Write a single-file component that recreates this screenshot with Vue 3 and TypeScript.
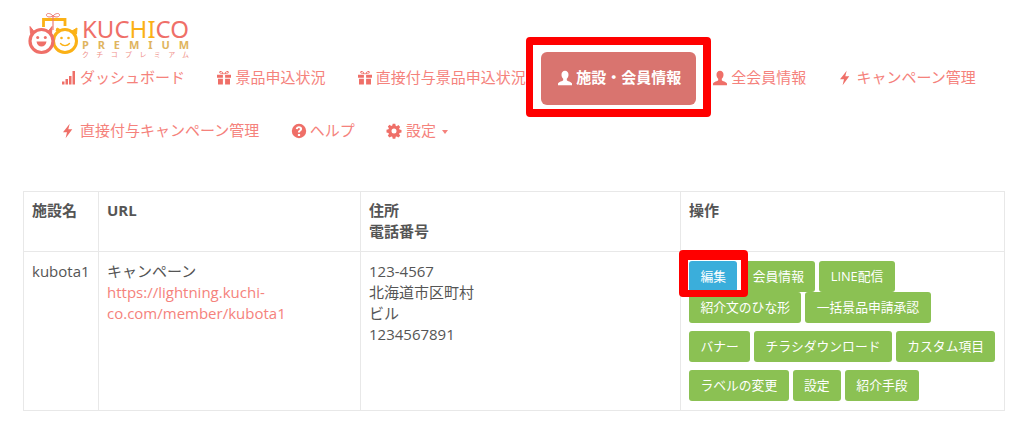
<script setup lang="ts">
type NavIcon = 'signal' | 'gift' | 'user' | 'flash' | 'help' | 'cog';

interface NavItem {
  label: string;
  icon: NavIcon;
  active?: boolean;
  caret?: boolean;
}

const navItems: NavItem[] = [
  { label: 'ダッシュボード', icon: 'signal' },
  { label: '景品申込状況', icon: 'gift' },
  { label: '直接付与景品申込状況', icon: 'gift' },
  { label: '施設・会員情報', icon: 'user', active: true },
  { label: '全会員情報', icon: 'user' },
  { label: 'キャンペーン管理', icon: 'flash' },
  { label: '直接付与キャンペーン管理', icon: 'flash' },
  { label: 'ヘルプ', icon: 'help' },
  { label: '設定', icon: 'cog', caret: true }
];

const buttonGroups = [
  ['編集', '会員情報', 'LINE配信', '紹介文のひな形', '一括景品申請承認'],
  ['バナー', 'チラシダウンロード', 'カスタム項目'],
  ['ラベルの変更', '設定', '紹介手段']
];

const addressLines = ['123-4567', '北海道市区町村', 'ビル', '1234567891'];
</script>

<template>
  <div class="page">
    <header class="header">
      <svg class="logo" width="170" height="48" viewBox="0 0 170 48" role="img" aria-label="KUCHICO PREMIUM">
        <!-- gift -->
        <path d="M27 4c-3-3.500-7-3-6.500-.5.4 1.800 4 2 6.500.5 2.500 1.500 6 1.300 6.500-.5.500-2.500-3.500-3-6.500.5z" fill="none" stroke="#ef7b74" stroke-width="1" />
        <path d="M17.500 15V7.500h21.500V14" fill="none" stroke="#fbb116" stroke-width="2.800" />
        <path d="M27 4v14" stroke="#ef7b74" stroke-width="1.200" />
        <!-- yellow face -->
        <path d="M46 19l5-3-.5 6z" fill="#fbb116" stroke="#fbb116" stroke-linejoin="round" />
        <path d="M30 19l1-3 4 2z" fill="#fbb116" stroke="#fbb116" stroke-linejoin="round" />
        <circle cx="39" cy="29" r="11.500" fill="#fff" stroke="#fbb116" stroke-width="3" />
        <circle cx="35.500" cy="26" r="1.300" fill="#fbb116" />
        <circle cx="42.500" cy="26" r="1.300" fill="#fbb116" />
        <path d="M34.500 31.500c2 2.800 7 2.800 9 0" fill="none" stroke="#fbb116" stroke-width="1.300" stroke-linecap="round" />
        <!-- red face -->
        <path d="M8 19.500L4 14.500l.5 7zM22 19.500l4-5-.5 7z" fill="#ef6f68" stroke="#ef6f68" stroke-linejoin="round" />
        <circle cx="15.500" cy="29" r="11.500" fill="#fff" stroke="#ef6f68" stroke-width="3.200" />
        <circle cx="11.700" cy="25.500" r="1.500" fill="#ef6f68" />
        <circle cx="19.300" cy="25.500" r="1.500" fill="#ef6f68" />
        <path d="M10.500 29.500h10c-.5 3.500-2.500 5-5 5s-4.500-1.500-5-5z" fill="#ef6f68" />
        <!-- wordmark -->
        <text x="56" y="26" class="logo-word" textLength="107" lengthAdjust="spacingAndGlyphs">KUC<tspan fill="#fbb116">HI</tspan>CO</text>
        <text x="56" y="37" class="logo-sub" textLength="107">PREMIUM</text>
        <text x="56" y="45" class="logo-kana" textLength="107">クチコプレミアム</text>
      </svg>

      <nav class="nav">
        <a
          v-for="item in navItems"
          :key="item.label"
          class="nav-item"
          :class="{ active: item.active, 'has-cog': item.icon === 'cog' }"
        >
          <svg class="nav-icon" viewBox="0 0 16 16" aria-hidden="true">
            <template v-if="item.icon === 'signal'">
              <rect x="1" y="11.500" width="2.500" height="3" />
              <rect x="4.500" y="9" width="2.500" height="5.500" />
              <rect x="8" y="6" width="2.500" height="8.500" />
              <rect x="11.500" y="1" width="2.500" height="13.500" />
            </template>
            <path
              v-else-if="item.icon === 'gift'"
              d="M1 4.800h5.900v3H1zM9.100 4.800H15v3H9.100zM2 8.800h4.900v5.700H2zM9.100 8.800H14v5.700H9.100zM8 4.200C6 4.200 3.500 4 3.200 2.600 3 1.400 4.200.8 5.300 1.200 6.600 1.700 7.500 3 8 4.200c.5-1.200 1.400-2.500 2.700-3 1.100-.4 2.300.2 2.100 1.400C12.500 4 10 4.200 8 4.200zM6.400 3.200C6 2.600 5.400 2.100 4.800 2.100c-.5 0-.6.500-.2.800.5.300 1.200.3 1.800.3zm3.200 0c.6 0 1.300 0 1.800-.3.400-.3.300-.8-.2-.8-.6 0-1.200.5-1.600 1.100z"
              fill-rule="evenodd"
            />
            <path
              v-else-if="item.icon === 'user'"
              d="M8 .8c2.200 0 3.500 1.700 3.500 3.900 0 1.700-.7 3.200-1.700 4.100v1.400c.4.900 4.700 1.500 5.200 3.300v1.700H1v-1.700c.5-1.800 4.800-2.400 5.200-3.300V8.800c-1-.9-1.700-2.400-1.700-4.100C4.500 2.500 5.800.8 8 .8z"
            />
            <path v-else-if="item.icon === 'flash'" d="M8.700.8L2 9.200h4L4.600 15.200l6.700-9h-4z" />
            <path
              v-else-if="item.icon === 'help'"
              d="M8 .8a7.200 7.200 0 1 1 0 14.400A7.200 7.200 0 0 1 8 .8zM6.900 11v2h2.200v-2zM8 3.200c-1.700 0-3 .8-3.200 2.700l2 .3c.1-.8.500-1.200 1.100-1.200.6 0 1 .3 1 .9 0 .5-.3.800-.9 1.300-.8.600-1.100 1.200-1.100 2.100v.3h2v-.2c0-.5.200-.7.800-1.200.8-.6 1.400-1.300 1.400-2.400 0-1.600-1.300-2.600-3.100-2.600z"
              fill-rule="evenodd"
            />
            <path
              v-else
              d="M6.700.8h2.600l.4 2 1 .4 1.700-1.100 1.800 1.800-1.100 1.700.4 1 2 .4v2.600l-2 .4-.4 1 1.100 1.700-1.800 1.800-1.700-1.100-1 .4-.4 2H6.700l-.4-2-1-.4-1.700 1.100-1.800-1.800 1.100-1.700-.4-1-2-.4V6.700l2-.4.4-1-1.100-1.700 1.800-1.800 1.700 1.100 1-.4zM8 5.500a2.500 2.500 0 1 0 0 5 2.500 2.500 0 0 0 0-5z"
              fill-rule="evenodd"
            />
          </svg>
          <span>{{ item.label }}</span>
          <i v-if="item.caret" class="caret"></i>
          <span v-if="item.active" class="mark mark-nav"></span>
        </a>
      </nav>
    </header>

    <table class="table">
      <colgroup>
        <col class="col-name" />
        <col class="col-url" />
        <col class="col-address" />
        <col />
      </colgroup>
      <thead>
        <tr>
          <th>施設名</th>
          <th>URL</th>
          <th>住所<br />電話番号</th>
          <th>操作</th>
        </tr>
      </thead>
      <tbody>
        <tr>
          <td>kubota1</td>
          <td>
            キャンペーン<br />
            <a class="url">https://lightning.kuchi-co.com/member/kubota1</a>
          </td>
          <td>
            <template v-for="line in addressLines" :key="line">{{ line }}<br /></template>
          </td>
          <td class="actions">
            <div v-for="(group, g) in buttonGroups" :key="g" class="btn-group">
              <button
                v-for="label in group"
                :key="label"
                class="btn"
                :class="{ primary: label === '編集' }"
              >
                {{ label }}
                <span v-if="label === '編集'" class="mark mark-btn"></span>
              </button>
            </div>
          </td>
        </tr>
      </tbody>
    </table>
  </div>
</template>

<style>
html,
body {
  background: #fff;
}
</style>

<style scoped>
.page {
  width: 1024px;
  height: 426px;
  overflow: hidden;
  font-family: "Open Sans", "Noto Sans CJK JP", sans-serif;
  font-size: 15px;
  line-height: 21px;
  color: #555;
}

.header {
  padding: 12px 0 0 26px;
}

.logo {
  display: block;
  margin-bottom: -8px;
}

.logo-word {
  font-family: "Noto Sans", sans-serif;
  font-size: 23px;
  fill: #ef6f68;
}

.logo-sub {
  font-family: "Noto Sans", sans-serif;
  font-size: 11px;
  font-weight: 700;
  fill: #e0b45e;
}

.logo-kana {
  font-family: "Noto Sans CJK JP", sans-serif;
  font-size: 7px;
  fill: #ef8f88;
}

.nav {
  display: flex;
  flex-wrap: wrap;
  margin-left: 20px;
  column-gap: 1.4px;
}

.nav-item {
  position: relative;
  display: flex;
  align-items: center;
  height: 51px;
  padding: 0 15px 2px;
  border-radius: 6px;
  font-size: 15px;
  color: #f5827c;
}

.nav-item.active {
  margin: 0 -0.5px 0 -1px;
  padding-left: 16px;
  background: #d9746f;
  color: #fff;
  font-weight: 700;
}

.nav-icon {
  flex: none;
  width: 16px;
  height: 16px;
  margin-right: 3px;
  fill: #ef6f68;
}

.has-cog .nav-icon {
  margin-right: 4px;
}

.active .nav-icon {
  fill: #fff;
}

.caret {
  margin: 2px 0 0 6px;
  border-top: 4px solid #f5827c;
  border-left: 3.500px solid transparent;
  border-right: 3.500px solid transparent;
}

.mark {
  position: absolute;
  box-sizing: border-box;
  border: 8px solid #f00;
  border-radius: 4px;
  pointer-events: none;
}

.mark-nav {
  inset: -15px -15px -12px;
  border-width: 8px 8px 8px 7px;
}

.mark-btn {
  left: -10px;
  top: -11px;
  width: 69px;
  height: 47px;
  z-index: 1;
  border-width: 10px 7px 7px 9px;
}

.table {
  width: 982px;
  margin: 33px 0 0 23px;
  border-collapse: collapse;
  table-layout: fixed;
}

.col-name {
  width: 75px;
}

.col-url {
  width: 262px;
}

.col-address {
  width: 320px;
}

.table th,
.table td {
  padding: 8px;
  border: 1px solid #e8e8e8;
  text-align: left;
  vertical-align: top;
}

.table th {
  padding-bottom: 9px;
  font-weight: 700;
}

.table td {
  padding-top: 9px;
}

.table .actions {
  padding-right: 4px;
  padding-bottom: 9px;
}

.url {
  color: #f5827c;
}

.btn-group {
  display: flex;
  flex-wrap: wrap;
  gap: 0 4px;
  margin-bottom: 8px;
}

.btn-group:last-child {
  margin-bottom: 0;
}

.btn {
  position: relative;
  height: 31px;
  padding: 0 11.400px;
  border: 0;
  border-radius: 3px;
  background: #8bc153;
  color: #fff;
  font-family: inherit;
  font-size: 12.800px;
  line-height: 31px;
}

.btn.primary {
  background: #3aaedb;
}
</style>
